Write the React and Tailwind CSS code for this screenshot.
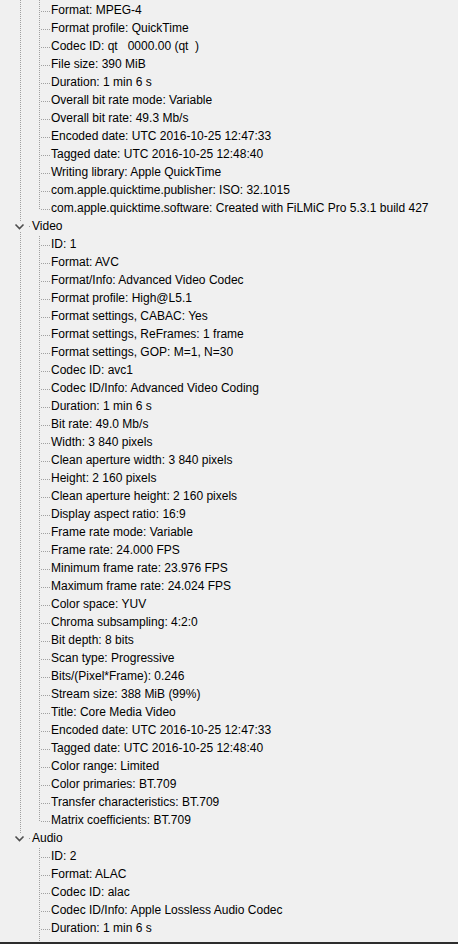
import React from 'react';

// MediaInfo-style tree view, scrolled so the General node sits just above the top edge.
// null entries are rows that are scrolled out of sight: only their tree lines show.
const groups = [
  {
    label: 'General',
    items: [
      null,
      'Format: MPEG-4',
      'Format profile: QuickTime',
      'Codec ID: qt   0000.00 (qt  )',
      'File size: 390 MiB',
      'Duration: 1 min 6 s',
      'Overall bit rate mode: Variable',
      'Overall bit rate: 49.3 Mb/s',
      'Encoded date: UTC 2016-10-25 12:47:33',
      'Tagged date: UTC 2016-10-25 12:48:40',
      'Writing library: Apple QuickTime',
      'com.apple.quicktime.publisher: ISO: 32.1015',
      'com.apple.quicktime.software: Created with FiLMiC Pro 5.3.1 build 427',
    ],
  },
  {
    label: 'Video',
    items: [
      'ID: 1',
      'Format: AVC',
      'Format/Info: Advanced Video Codec',
      'Format profile: High@L5.1',
      'Format settings, CABAC: Yes',
      'Format settings, ReFrames: 1 frame',
      'Format settings, GOP: M=1, N=30',
      'Codec ID: avc1',
      'Codec ID/Info: Advanced Video Coding',
      'Duration: 1 min 6 s',
      'Bit rate: 49.0 Mb/s',
      'Width: 3 840 pixels',
      'Clean aperture width: 3 840 pixels',
      'Height: 2 160 pixels',
      'Clean aperture height: 2 160 pixels',
      'Display aspect ratio: 16:9',
      'Frame rate mode: Variable',
      'Frame rate: 24.000 FPS',
      'Minimum frame rate: 23.976 FPS',
      'Maximum frame rate: 24.024 FPS',
      'Color space: YUV',
      'Chroma subsampling: 4:2:0',
      'Bit depth: 8 bits',
      'Scan type: Progressive',
      'Bits/(Pixel*Frame): 0.246',
      'Stream size: 388 MiB (99%)',
      'Title: Core Media Video',
      'Encoded date: UTC 2016-10-25 12:47:33',
      'Tagged date: UTC 2016-10-25 12:48:40',
      'Color range: Limited',
      'Color primaries: BT.709',
      'Transfer characteristics: BT.709',
      'Matrix coefficients: BT.709',
    ],
  },
  {
    label: 'Audio',
    items: [
      'ID: 2',
      'Format: ALAC',
      'Codec ID: alac',
      'Codec ID/Info: Apple Lossless Audio Codec',
      'Duration: 1 min 6 s',
      null,
    ],
  },
];

const LINE = '#a0a0a0';

// dotted line helpers (one pixel on, one off, like the win32 tree control)
const vDots = (x, y0, y1, key) => {
  const out = [];
  for (let y = y0; y < y1; y += 2) out.push(<rect key={`${key}-${y}`} x={x} y={y} width="1" height="1" fill={LINE} />);
  return out;
};
const hDots = (y, x0, x1, key) => {
  const out = [];
  for (let x = x0; x < x1; x += 2) out.push(<rect key={`${key}-${x}`} x={x} y={y} width="1" height="1" fill={LINE} />);
  return out;
};

const GroupRow = ({ label, lineAbove, lineBelow }) => (
  <div className="flex h-[18px] items-center">
    <svg width="32" height="18" className="shrink-0" shapeRendering="crispEdges">
      {lineAbove && vDots(20, 0, 4, 'a')}
      {lineBelow && vDots(20, 14, 18, 'b')}
      <polyline
        points="15.5,6.5 19.5,10.5 23.5,6.5"
        fill="none"
        stroke="#4d4d4d"
        strokeWidth="1.6"
        shapeRendering="geometricPrecision"
      />
      <rect x="29" y="8" width="1" height="1" fill={LINE} />
    </svg>
    <span className="mb-[2px] whitespace-pre">{label}</span>
  </div>
);

const ItemRow = ({ text, outerLine, last }) => (
  <div className="flex h-[18px] items-center">
    <svg width="51" height="18" className="shrink-0" shapeRendering="crispEdges">
      {outerLine && vDots(20, 0, 18, 'o')}
      {vDots(39, 0, last ? 10 : 18, 'v')}
      {text && hDots(9, 41, 50, 'h')}
    </svg>
    {text && <span className="mb-[2px] whitespace-pre">{text}</span>}
  </div>
);

export default function App() {
  return (
    <div className="flex h-[944px] w-[458px] flex-col overflow-hidden bg-[#f0f0f0] font-['Liberation_Sans',Arial,sans-serif] text-[12px] leading-[18px] text-black">
      <div className="min-h-0 flex-1 overflow-hidden">
        <div className="mt-[-34px]">
          {groups.map((g, gi) => {
            const lastGroup = gi === groups.length - 1;
            return (
              <div key={g.label}>
                {gi === 0 ? (
                  <div className="h-[18px]" />
                ) : (
                  <GroupRow label={g.label} lineAbove lineBelow={!lastGroup} />
                )}
                {g.items.map((t, i) => (
                  <ItemRow
                    key={i}
                    text={t}
                    outerLine={!lastGroup}
                    last={!lastGroup && i === g.items.length - 1}
                  />
                ))}
              </div>
            );
          })}
        </div>
      </div>
      <div className="h-[2px] shrink-0 bg-[#2d2d2d]" />
    </div>
  );
}
